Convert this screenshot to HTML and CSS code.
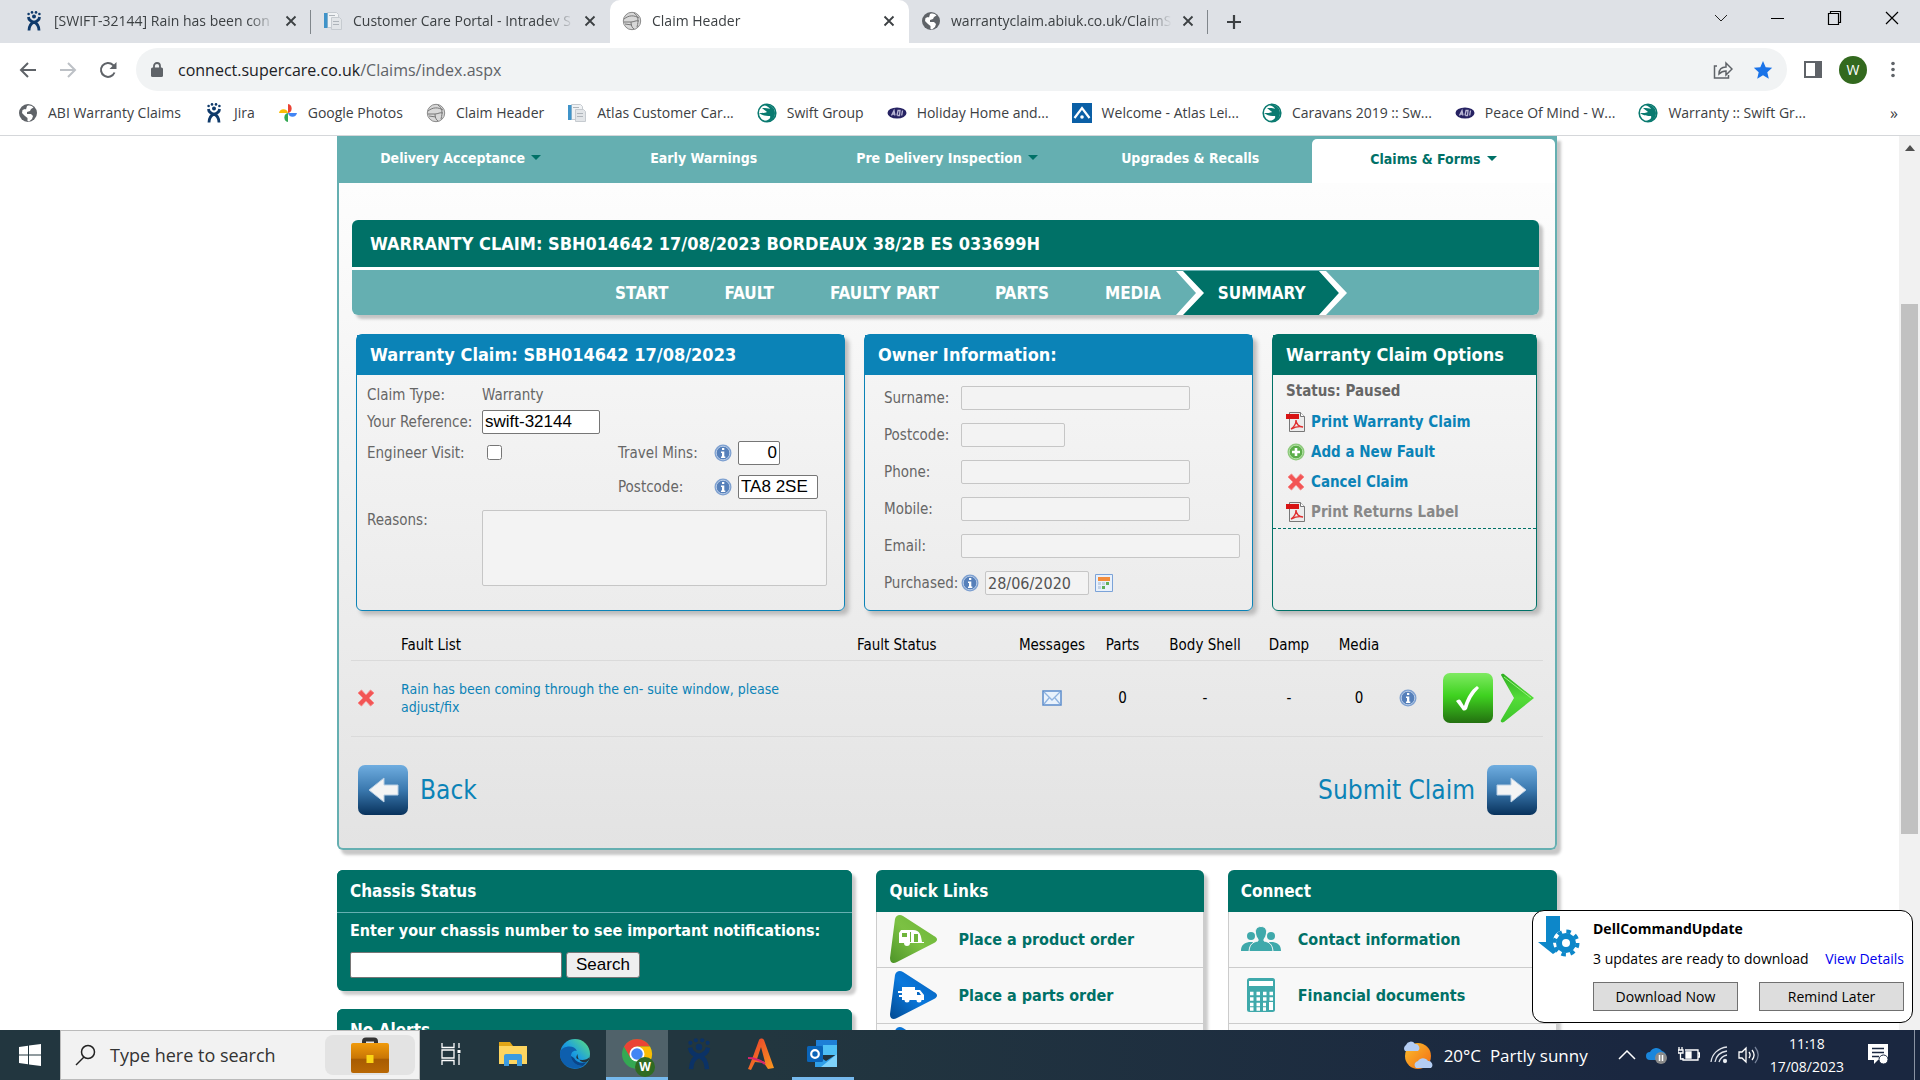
FILE: index.html
```html
<!DOCTYPE html>
<html lang="en">
<head>
    <meta charset="UTF-8">
    <meta name="viewport" content="width=device-width, initial-scale=1.0">
    <title>Claim Header</title>
    <link rel="stylesheet" href="styles.css">
</head>
<body>
    <!-- ICON SPRITE -->
    <svg class="sprite" aria-hidden="true">
        <defs>
            <linearGradient id="gBlue" x1="0" y1="0" x2="0" y2="1"><stop offset="0" stop-color="#6fade0"/><stop offset=".5" stop-color="#3a78ae"/><stop offset="1" stop-color="#08325c"/></linearGradient>
            <linearGradient id="gGreen" x1="0" y1="0" x2="0" y2="1"><stop offset="0" stop-color="#7fea62"/><stop offset=".45" stop-color="#3fd220"/><stop offset="1" stop-color="#237010"/></linearGradient>
            <linearGradient id="gArrow" x1="0" y1="0" x2="0" y2="1"><stop offset="0" stop-color="#2fae22"/><stop offset=".5" stop-color="#54dc38"/><stop offset="1" stop-color="#3cc42a"/></linearGradient>
            <linearGradient id="gLeaf" x1="0" y1="1" x2="1" y2="0"><stop offset="0" stop-color="#4d9428"/><stop offset=".5" stop-color="#7cc143"/><stop offset="1" stop-color="#6ab536"/></linearGradient>
            <linearGradient id="gSea" x1="0" y1="1" x2="1" y2="0"><stop offset="0" stop-color="#024a92"/><stop offset=".5" stop-color="#0a78dc"/><stop offset="1" stop-color="#0560b8"/></linearGradient>
            <linearGradient id="gCase" x1="0" y1="0" x2="0" y2="1"><stop offset="0" stop-color="#f09a0a"/><stop offset=".5" stop-color="#c97606"/><stop offset=".55" stop-color="#a85c02"/><stop offset="1" stop-color="#b96804"/></linearGradient>
            <linearGradient id="gEdge" x1="0" y1="1" x2="1" y2="0"><stop offset="0" stop-color="#0c59a4"/><stop offset=".5" stop-color="#1b9de2"/><stop offset="1" stop-color="#5fe37a"/></linearGradient>
            <linearGradient id="gA" x1="0" y1="0" x2="1" y2="1"><stop offset="0" stop-color="#e8382e"/><stop offset="1" stop-color="#fa9a1e"/></linearGradient>
            <linearGradient id="gSun" x1="0" y1="0" x2="1" y2="1"><stop offset="0" stop-color="#fbc02d"/><stop offset="1" stop-color="#f26a12"/></linearGradient>
        </defs>
        <symbol id="jira" viewBox="0 0 16 20"><g fill="currentColor"><circle cx="2.6" cy="3" r="1.3"/><circle cx="6" cy="1.4" r="1.3"/><circle cx="10" cy="1.4" r="1.3"/><circle cx="13.4" cy="3" r="1.3"/><circle cx="8" cy="5.600" r="2"/></g><path fill="none" stroke="currentColor" stroke-width="2.800" d="M2.400 6c.4 3 2.500 4.500 5.600 5.200 3 1 4.800 4 5 8.300M13.600 6c-.4 3-2.500 4.500-5.600 5.200-3 1-4.800 4-5 8.300"/></symbol>
        <symbol id="doc" viewBox="0 0 20 20"><path fill="#f0f2f4" stroke="#c6cbd0" d="M4.500 1.500h9l2 2v13h-11z"/><path fill="#3f93c9" d="M1 2h3.500v15H1z"/><path fill="#e2e5e8" stroke="#c6cbd0" d="M8.500 6.500h8l2 2v10h-10z"/><path stroke="#aeb4ba" d="M10 10.500h6M10 13.500h6M6 4.500h6"/></symbol>
        <symbol id="globe" viewBox="0 0 20 20"><circle cx="10" cy="10" r="9" fill="#5f6368"/><path fill="#fff" d="M9 3c3-1 5 0 6.500 1.500L13 6l-1 2-3 1v2h4l2 2-1 3-3 2.500-1.500-.5V15L7 13l-3-3 .5-3L7 6l1 .6z"/></symbol>
        <symbol id="ball" viewBox="0 0 20 20"><circle cx="10" cy="10" r="8.700" fill="#d8d8d8" stroke="#8a8a8a"/><path fill="none" stroke="#777" d="M2 8c5-4 10-4 15-1M2 11h7c3 0 5-2 8-1M9 11c0 3 1 6 3 7M12 2c4 3 5 7 3 14M3 13l7 1"/></symbol>
        <symbol id="photos" viewBox="0 0 20 20"><path fill="#ea4335" d="M10 1a4.600 4.600 0 0 1 0 9z"/><path fill="#4285f4" d="M19 10a4.600 4.600 0 0 1-9 0z"/><path fill="#34a853" d="M10 19a4.600 4.600 0 0 1 0-9z"/><path fill="#fbbc04" d="M1 10a4.600 4.600 0 0 1 9 0z"/></symbol>
        <symbol id="swift" viewBox="0 0 20 20"><circle cx="10" cy="10" r="8.800" fill="#fff" stroke="#0a7a70" stroke-width="1.600"/><path fill="#0a7a70" d="M7 2c5-2 11 2 11 8s-5 10-10 8c4-1 6-3 5-5-3 0-7 0-11-3 4 0 6 0 8-1C8 7 6 6 5 5c4 0 6 0 8 1-1-2-3-3-6-4z"/></symbol>
        <symbol id="abi" viewBox="0 0 20 20"><ellipse cx="10" cy="10" rx="9.500" ry="5.500" fill="#262262"/><path stroke="#b9b7d4" stroke-width="1.300" fill="none" d="M4.500 12.500l2.500-5 1 5M5.500 11h2M10 12.500l1-5h2l-.5 5h-2M15.500 7.500l-.8 5"/></symbol>
        <symbol id="atlas" viewBox="0 0 20 20"><path fill="#0a5fa6" d="M0 0h20v20H0z"/><path fill="none" stroke="#fff" stroke-width="2.200" d="M2.500 15L10 5l7.500 10"/><circle cx="10" cy="14" r="1.800" fill="#fff"/></symbol>
        <symbol id="close" viewBox="0 0 12 12"><path stroke="currentColor" stroke-width="1.800" d="M1.500 1.500l9 9M10.500 1.500l-9 9"/></symbol>
        <symbol id="info" viewBox="0 0 18 18"><circle cx="9" cy="9" r="8.500" fill="#7c9fd0"/><circle cx="9" cy="9" r="6.800" fill="#5680ba" stroke="#b7cbe6"/><path fill="#fff" d="M8 4h2.300v2H8zM7 7.500h3.300v5h1V14H7v-1.500h1V9H7z"/></symbol>
        <symbol id="cross" viewBox="0 0 18 18"><path fill="#f25555" stroke="#f78a8a" d="M1 4l3.500-3L9 6l4.500-5L17 4l-5 5 5 5-3.500 3L9 12l-4.500 5L1 14l5-5z"/></symbol>
        <symbol id="pdf" viewBox="0 0 20 20"><path fill="#ececec" stroke="#777" d="M3.500.5h11l4 4v15h-15z"/><path fill="#fff" stroke="#777" d="M14.500.5v4h4"/><path fill="#d81414" d="M0 2h13v5H0z"/><path fill="none" stroke="#e03030" stroke-width="1.400" d="M5 17c3-2 5-5 5-9 0 4 3 7 7 7-4-1-8 0-12 2z"/></symbol>
        <symbol id="plus" viewBox="0 0 18 18"><circle cx="9" cy="9" r="8.500" fill="#8cc97a"/><circle cx="9" cy="9" r="6.800" fill="#5cae4a" stroke="#b4e0a6"/><path stroke="#fff" stroke-width="2.600" d="M9 5v8M5 9h8"/></symbol>
        <symbol id="calendar" viewBox="0 0 18 18"><path fill="#e8f0fb" stroke="#7ba3d8" d="M.5.5h17v17H.5z"/><path fill="#f28c3c" d="M3 3h12v4H3z"/><path fill="#c3d2e6" d="M3 8h3v3H3zM7 8h3v3H7zM3 12h3v3H3z"/><path fill="#5fae5a" d="M11 8h3v3h-3zM7 12h3v3H7z"/></symbol>
        <symbol id="mail" viewBox="0 0 20 16"><path fill="#e9f2fc" stroke="#5b8ccb" stroke-width="1.500" d="M1 1h18v14H1z"/><path fill="none" stroke="#8fb3e0" stroke-width="1.300" d="M2 2l8 8 8-8M2 14l5-6M18 14l-5-6"/></symbol>
        <symbol id="tick" viewBox="0 0 50 50"><rect width="50" height="50" rx="7" fill="url(#gGreen)"/><path fill="#fff" d="M13 28c2-2 4-2 5 0l3 5c3-9 7-16 13-20l2 2c-6 6-10 13-12 21-2 2-4 2-5 0z"/></symbol>
        <symbol id="next" viewBox="0 0 34 50"><path fill="url(#gArrow)" d="M1 2c1-2 3-1 4 0l29 23L4 49c-2 1-4 0-3-2l13-22z"/><path fill="none" stroke="#9af07e" d="M4 4l27 21"/></symbol>
        <symbol id="arrow" viewBox="0 0 50 50"><rect width="50" height="50" rx="7" fill="url(#gBlue)"/><path fill="#f4f4f4" stroke="#b8cfe4" stroke-width="1" d="M11 25l15-12v7h14v10H26v7z"/></symbol>
        <symbol id="caravan" viewBox="0 0 48 50"><path fill="url(#gLeaf)" d="M6 5c1-4 5-5 8-3l31 20c4 2 4 5 0 7L8 48c-4 2-7 1-7-4z"/><path fill="#fff" d="M12 16h12c7 0 8 5 9 12h2v1H21a3 3 0 0 1-6 0h-5V19z"/><path fill="#6fb53b" d="M13 19h5v4h-5zM21 18h1v10h-1zM25 20h4v8h-4z"/></symbol>
        <symbol id="truck" viewBox="0 0 48 50"><path fill="url(#gSea)" d="M6 5c1-4 5-5 8-3l31 20c4 2 4 5 0 7L8 48c-4 2-7 1-7-4z"/><path fill="#fff" d="M13 17h13v3h5l4 5v5H13v-3h-3v-2h3v-2H9v-2h4z"/><circle cx="18" cy="30" r="2.500" fill="#fff"/><circle cx="30" cy="30" r="2.500" fill="#fff"/><path fill="#0868c4" d="M28 22h2l2 3h-4z"/></symbol>
        <symbol id="people" viewBox="0 0 40 24"><g fill="#3fa9ab"><circle cx="10" cy="9" r="4"/><circle cx="30" cy="9" r="4"/><path d="M0 24c0-6 3-8 8-9h4v9zM40 24c0-6-3-8-8-9h-4v9z"/><path stroke="#f8f8f8" d="M20-.5c4 0 6 3 5.500 6.500-.3 3-1.500 5-2.500 6v2c5 1 8.500 3 9 10.500H8c.5-7.500 4-9.500 9-10.500v-2c-1-1-2.200-3-2.500-6C14 2.500 16-.5 20-.5z"/></g></symbol>
        <symbol id="calc" viewBox="0 0 28 34"><rect width="28" height="34" rx="2.500" fill="#3fa9ab"/><path fill="#fff" d="M2 3h24v5H2z"/><path stroke="#fff" stroke-width="3.500" stroke-dasharray="3.500 3" d="M3 15.500h23M3 21h23M3 26.500h16M3 31h16"/><path fill="#fff" d="M22 24h4v8h-4z"/></symbol>
        <symbol id="dell" viewBox="0 0 42 42"><path fill="#0d87c9" d="M8 0h14v15c-7 3-9 10-5 18l1 3-3 2L0 26h8z"/><g fill="none" stroke="#0d87c9"><circle cx="28" cy="27" r="7" stroke-width="6"/><circle cx="28" cy="27" r="11.500" stroke-width="4" stroke-dasharray="4.500 4.530"/></g></symbol>
        <symbol id="chrome" viewBox="0 0 32 32"><circle cx="16" cy="16" r="15" fill="#34a853"/><path fill="#ea4335" d="M3 8.500a15 15 0 0 1 26 0H16L9.500 20z"/><path fill="#fbbc04" d="M29 8.500A15 15 0 0 1 16 31l6.500-11.500L16 8.500z"/><circle cx="16" cy="16" r="7.500" fill="#fff"/><circle cx="16" cy="16" r="5.800" fill="#4285f4"/></symbol>
    </svg>

    <!-- BROWSER TABS -->
    <header class="tab-strip">
        <div class="tab">
            <svg class="icon navy"><use href="#jira"/></svg>
            <span class="tab-title">[SWIFT-32144] Rain has been con</span>
            <button class="tab-close" aria-label="Close tab"><svg><use href="#close"/></svg></button>
        </div>
        <div class="tab">
            <svg class="icon"><use href="#doc"/></svg>
            <span class="tab-title">Customer Care Portal - Intradev S</span>
            <button class="tab-close" aria-label="Close tab"><svg><use href="#close"/></svg></button>
        </div>
        <div class="tab active">
            <svg class="icon"><use href="#ball"/></svg>
            <span class="tab-title">Claim Header</span>
            <button class="tab-close" aria-label="Close tab"><svg><use href="#close"/></svg></button>
        </div>
        <div class="tab">
            <svg class="icon"><use href="#globe"/></svg>
            <span class="tab-title">warrantyclaim.abiuk.co.uk/ClaimS</span>
            <button class="tab-close" aria-label="Close tab"><svg><use href="#close"/></svg></button>
        </div>
        <button class="new-tab" aria-label="New tab"><svg width="16" height="16"><path d="M8 1v14M1 8h14" stroke="#3c4043" stroke-width="2.200"/></svg></button>
        <div class="window-buttons">
            <button aria-label="Search tabs"><svg width="16" height="16"><path d="M2 5l6 6 6-6" fill="none" stroke="#222"/></svg></button>
            <button aria-label="Minimise"><svg width="16" height="16"><path d="M1 8.500h13" stroke="#000"/></svg></button>
            <button aria-label="Restore"><svg width="16" height="16"><path d="M1.500 3.500h10v11h-10zM3.500 3.500v-2h10v11h-2" fill="none" stroke="#000" stroke-width="1.200"/></svg></button>
            <button aria-label="Close"><svg width="16" height="16"><path d="M2 2l12 12M14 2L2 14" stroke="#000" stroke-width="1.200"/></svg></button>
        </div>
    </header>

    <!-- ADDRESS BAR -->
    <div class="toolbar">
        <button aria-label="Back"><svg width="20" height="20"><path d="M18 10H3M10 3l-7 7 7 7" fill="none" stroke="#5f6368" stroke-width="2"/></svg></button>
        <button aria-label="Forward"><svg width="20" height="20"><path d="M2 10h15M10 3l7 7-7 7" fill="none" stroke="#bdc1c6" stroke-width="2"/></svg></button>
        <button aria-label="Reload"><svg width="20" height="20"><path d="M16.500 12.500A7 7 0 1 1 15 5l1.500 1.500" fill="none" stroke="#5f6368" stroke-width="2"/><path d="M18.500 2v7h-7z" fill="#5f6368"/></svg></button>
        <div class="address">
            <svg width="12" height="16"><path d="M3 6V4a3 3 0 0 1 6 0v2" fill="none" stroke="#5f6368" stroke-width="1.800"/><rect y="5.500" width="12" height="9.500" rx="1.500" fill="#5f6368"/></svg>
            <span class="url">connect.supercare.co.uk<span class="path">/Claims/index.aspx</span></span>
            <button aria-label="Share"><svg width="20" height="20"><path d="M4 6H1.500v12h14v-3M6 14c0-5 3-7 7-7V3l6 6-6 6v-4c-3 0-5 1-7 3z" fill="none" stroke="#5f6368" stroke-width="1.500"/></svg></button>
            <button aria-label="Bookmark"><svg width="20" height="20"><path d="M10 1l2.700 6.200 6.500.6-4.900 4.400 1.500 6.500L10 15.300l-5.800 3.400 1.500-6.500L.8 7.800l6.500-.6z" fill="#1a73e8"/></svg></button>
        </div>
        <button aria-label="Side panel"><svg width="20" height="20"><path d="M2 2h16v15H2z" fill="#fff" stroke="#5f6368" stroke-width="2"/><path d="M12 2h6v15h-6z" fill="#5f6368"/></svg></button>
        <button class="avatar" aria-label="Profile">W</button>
        <button aria-label="Menu"><svg width="20" height="20" fill="#5f6368"><circle cx="10" cy="3.500" r="1.800"/><circle cx="10" cy="9.500" r="1.800"/><circle cx="10" cy="15.500" r="1.800"/></svg></button>
    </div>

    <!-- BOOKMARKS -->
    <nav class="bookmarks">
        <a href="#"><svg class="icon"><use href="#globe"/></svg>ABI Warranty Claims</a>
        <a href="#"><svg class="icon navy"><use href="#jira"/></svg>Jira</a>
        <a href="#"><svg class="icon"><use href="#photos"/></svg>Google Photos</a>
        <a href="#"><svg class="icon"><use href="#ball"/></svg>Claim Header</a>
        <a href="#"><svg class="icon"><use href="#doc"/></svg>Atlas Customer Car...</a>
        <a href="#"><svg class="icon"><use href="#swift"/></svg>Swift Group</a>
        <a href="#"><svg class="icon"><use href="#abi"/></svg>Holiday Home and...</a>
        <a href="#"><svg class="icon"><use href="#atlas"/></svg>Welcome - Atlas Lei...</a>
        <a href="#"><svg class="icon"><use href="#swift"/></svg>Caravans 2019 :: Sw...</a>
        <a href="#"><svg class="icon"><use href="#abi"/></svg>Peace Of Mind - W...</a>
        <a href="#"><svg class="icon"><use href="#swift"/></svg>Warranty :: Swift Gr...</a>
        <button class="more" aria-label="More bookmarks">»</button>
    </nav>

    <!-- PAGE -->
    <div class="viewport">
        <div class="page">
            <main class="main">
                <nav class="main-nav">
                    <a href="#" class="drop">Delivery Acceptance</a>
                    <a href="#">Early Warnings</a>
                    <a href="#" class="drop">Pre Delivery Inspection</a>
                    <a href="#">Upgrades &amp; Recalls</a>
                    <a href="#" class="drop current">Claims &amp; Forms</a>
                </nav>

                <div class="claim-bar">
                    <h1>WARRANTY CLAIM: SBH014642 17/08/2023 BORDEAUX 38/2B ES 033699H</h1>
                    <nav class="steps">
                        <a href="#">START</a>
                        <a href="#">FAULT</a>
                        <a href="#">FAULTY PART</a>
                        <a href="#">PARTS</a>
                        <a href="#">MEDIA</a>
                        <svg width="28" height="44"><path d="M6 0h22v44H6l20-22z" fill="#007167"/><path d="M0 0h7l21 22L7 44H0l20-22z" fill="#fff"/></svg>
                        <a href="#" class="on">SUMMARY</a>
                        <svg width="28" height="44"><path d="M0 0l20 22L0 44z" fill="#007167"/><path d="M0 0h7l21 22L7 44H0l20-22z" fill="#fff"/></svg>
                    </nav>
                </div>

                <div class="panels">
                    <section class="panel">
                        <h2>Warranty Claim: SBH014642 17/08/2023</h2>
                        <div class="claim-form">
                            <span>Claim Type:</span><span class="wide">Warranty</span>
                            <label for="ref">Your Reference:</label><div class="wide"><input class="w-ref" id="ref" value="swift-32144"></div>
                            <label for="visit">Engineer Visit:</label><input type="checkbox" id="visit">
                            <label for="mins">Travel Mins:</label><div class="with-icon"><svg class="icon-sm"><use href="#info"/></svg><input class="w-mins" id="mins" value="0"></div>
                            <label class="col3" for="pc">Postcode:</label><div class="with-icon"><svg class="icon-sm"><use href="#info"/></svg><input class="w-pc" id="pc" value="TA8 2SE"></div>
                            <label class="top" for="reasons">Reasons:</label><textarea class="wide" id="reasons" disabled></textarea>
                        </div>
                    </section>

                    <section class="panel">
                        <h2>Owner Information:</h2>
                        <div class="owner-form">
                            <label for="surname">Surname:</label><input class="w-std" id="surname" disabled>
                            <label for="opc">Postcode:</label><input class="w-short" id="opc" disabled>
                            <label for="phone">Phone:</label><input class="w-std" id="phone" disabled>
                            <label for="mobile">Mobile:</label><input class="w-std" id="mobile" disabled>
                            <label for="email">Email:</label><input class="w-long" id="email" disabled>
                            <label for="bought">Purchased:</label><div class="with-icon"><svg class="icon-sm"><use href="#info"/></svg><input class="w-short" id="bought" value="28/06/2020" disabled><svg class="icon-sm"><use href="#calendar"/></svg></div>
                        </div>
                    </section>

                    <section class="panel green">
                        <h2>Warranty Claim Options</h2>
                        <div class="options">
                            <p>Status: Paused</p>
                            <a href="#"><svg class="icon"><use href="#pdf"/></svg>Print Warranty Claim</a>
                            <a href="#"><svg class="icon pad"><use href="#plus"/></svg>Add a New Fault</a>
                            <a href="#"><svg class="icon pad"><use href="#cross"/></svg>Cancel Claim</a>
                            <a href="#" class="off"><svg class="icon"><use href="#pdf"/></svg>Print Returns Label</a>
                        </div>
                    </section>
                </div>

                <table class="faults">
                    <colgroup><col class="c-del"><col><col class="c-status"><col class="c-msg"><col class="c-parts"><col class="c-body"><col class="c-damp"><col class="c-media"><col class="c-act"></colgroup>
                    <thead>
                        <tr><th></th><th class="left">Fault List</th><th class="left">Fault Status</th><th>Messages</th><th>Parts</th><th>Body Shell</th><th>Damp</th><th>Media</th><th></th></tr>
                    </thead>
                    <tbody>
                        <tr>
                            <td class="left del"><svg class="icon-sm"><use href="#cross"/></svg></td>
                            <td class="left fault"><a href="#">Rain has been coming through the en- suite window, please adjust/fix</a></td>
                            <td></td>
                            <td><svg class="icon-mail"><use href="#mail"/></svg></td>
                            <td>0</td><td>-</td><td>-</td><td>0</td>
                            <td><div class="actions"><svg class="icon-sm"><use href="#info"/></svg><svg class="big"><use href="#tick"/></svg><svg class="go"><use href="#next"/></svg></div></td>
                        </tr>
                    </tbody>
                </table>

                <div class="pager">
                    <a href="#"><svg class="big"><use href="#arrow"/></svg>Back</a>
                    <a href="#">Submit Claim<svg class="big flip"><use href="#arrow"/></svg></a>
                </div>
            </main>

            <div class="bottom">
                <div class="left-col">
                    <section class="card solid">
                        <h2>Chassis Status</h2>
                        <form class="chassis">
                            <label for="chassis">Enter your chassis number to see important notifications:</label>
                            <div class="search-row"><input id="chassis"><button type="button">Search</button></div>
                        </form>
                    </section>
                    <section class="card solid">
                        <h2>No Alerts</h2>
                    </section>
                </div>
                <section class="card">
                    <h2>Quick Links</h2>
                    <a href="#"><svg class="tri"><use href="#caravan"/></svg>Place a product order</a>
                    <a href="#"><svg class="tri"><use href="#truck"/></svg>Place a parts order</a>
                    <a href="#"><svg class="tri"><use href="#truck"/></svg></a>
                </section>
                <section class="card connect">
                    <h2>Connect</h2>
                    <a href="#"><svg class="link-icon"><use href="#people"/></svg>Contact information</a>
                    <a href="#"><svg class="link-icon"><use href="#calc"/></svg>Financial documents</a>
                    <a href="#"></a>
                </section>
            </div>
        </div>

        <div class="scrollbar">
            <svg width="10" height="6"><path d="M0 6l5-6 5 6z" fill="#505050"/></svg>
            <div class="thumb"></div>
        </div>
    </div>

    <!-- TASKBAR -->
    <footer class="taskbar">
        <button class="start" aria-label="Start"><svg width="22" height="22" fill="#fff"><path d="M0 3l9-1.300V10.500H0zM10 1.500L22 0v10.500H10zM0 11.500h9v8.800L0 19zM10 11.500h12V22l-12-1.500z"/></svg></button>
        <div class="search">
            <svg width="24" height="24"><circle cx="14" cy="9" r="6.500" fill="none" stroke="#222" stroke-width="1.500"/><path d="M10 14l-8 8" stroke="#222" stroke-width="1.500"/></svg>
            <span>Type here to search</span>
            <div class="case"><svg width="38" height="36"><path d="M13 7V4.500a2 2 0 0 1 2-2h8a2 2 0 0 1 2 2V7" fill="none" stroke="#333" stroke-width="4"/><rect y="6" width="38" height="30" rx="2" fill="url(#gCase)"/><rect x="15.500" y="18" width="7" height="8" fill="#fbd514"/></svg></div>
        </div>
        <div class="apps">
            <button aria-label="Task view"><svg width="20" height="22" fill="none" stroke="#fff" stroke-width="1.300"><path d="M1 0v4.500h12V0M1 7h12v8H1zM1 22v-4.500h12V22M18 0v5M18 11v11"/><path d="M16.500 7h3v3h-3z" fill="#fff" stroke="none"/></svg></button>
            <button aria-label="File Explorer"><svg width="28" height="24"><path d="M0 0h11l3 4h14v18H0z" fill="#e0a516"/><path d="M0 4h28v18H0z" fill="#fdd560"/><path d="M5 24V14a2 2 0 0 1 2-2h14a2 2 0 0 1 2 2v10h-5v-6h-8v6z" fill="#3c9be0"/></svg></button>
            <button aria-label="Edge"><svg width="32" height="32"><circle cx="16" cy="16" r="15" fill="url(#gEdge)"/><path d="M1 14c2-6 14-8 17-1-4-1-6 2-6 5 0 5 5 10 12 10-3 2-7 3-10 2C5 29 0 21 1 14z" fill="#0e5fae"/><path d="M30.500 19c-2 3-8 4-12 2-2-1-1-3 0-5 0 7 5 9 9 8 2-1 3-3 3-5z" fill="#22363f"/><path d="M12 18c0 5 5 10 12 10l4-4c-6 2-11 0-13-4z" fill="#0b4488"/></svg></button>
            <button class="open lit" aria-label="Chrome"><svg width="32" height="32"><use href="#chrome"/></svg><span class="badge">W</span></button>
            <button class="dim" aria-label="Jira"><svg width="26" height="32"><use href="#jira"/></svg></button>
            <button aria-label="Acronis"><svg width="26" height="32"><path fill-rule="evenodd" d="M0 31C4 22 8 10 11 2c1-2 4-2 5 0l10 28-6 1-4-6-9-1-4 8zM13 9L9 21l8 3z" fill="url(#gA)"/><path d="M0 20c6 0 12 2 17 6" fill="none" stroke="#d6246e" stroke-width="2.200"/></svg></button>
            <button class="open" aria-label="Outlook"><svg width="32" height="30"><path d="M9 1h21v14H9z" fill="#1e7fd6"/><path d="M16 6h14v10H16z" fill="#4fc0f5"/><path d="M8 15l11 7 11-7v13H8z" fill="#2f9fe8"/><path d="M30 15v13H14z" fill="#7fd3fa"/><rect y="7" width="16" height="16" rx="1.500" fill="#0a64b8"/><circle cx="8" cy="15" r="3.800" fill="none" stroke="#fff" stroke-width="2.200"/></svg></button>
        </div>
        <div class="tray">
            <div class="weather"><svg width="32" height="32"><circle cx="16" cy="17" r="13" fill="url(#gSun)"/><g fill="#b4cdf3"><path d="M3 12a4 4 0 0 1 1-6 5 5 0 0 1 9-1 4 4 0 0 1 3 7zM14 29a4 4 0 0 1 2-7 6 6 0 0 1 10 0 4 4 0 0 1 3 7z"/></g></svg>20°C&nbsp; Partly sunny</div>
            <svg width="18" height="10"><path d="M1 9l8-8 8 8" fill="none" stroke="#fff" stroke-width="1.500"/></svg>
            <svg width="22" height="18"><path d="M4 14a4 4 0 0 1 0-8 7 7 0 0 1 12-1c4 1 5 5 3 9z" fill="#1a86dc"/><circle cx="15" cy="12" r="6" fill="#8a8a8a"/><path d="M13.500 9v6M16.500 9v6" stroke="#fff" stroke-width="1.500"/></svg>
            <svg width="22" height="16" fill="none" stroke="#fff" stroke-width="1.300"><path d="M7 3h13v10H5v-2M20 6h1.500v4H20M1 0v3M4 0v3M0 3h5v3H0zM2.500 6v6H5"/><path d="M8 5h5v6H8z" fill="#fff"/></svg>
            <svg width="18" height="18" fill="none" stroke="#dfe3ea" stroke-width="1.300"><path d="M1 16C2 8 8 2 17 1M5 16c1-6 5-10 12-11M9 16c1-3 3-6 8-7"/><circle cx="15" cy="15" r="1.500" fill="#fff"/></svg>
            <svg width="22" height="18" fill="none" stroke="#fff" stroke-width="1.300"><path d="M1 6h3l4-4v14l-4-4H1zM11 6c1.500 2 1.500 4 0 6M14 4c2.500 3 2.500 7 0 10"/><path d="M17 1c4 5 4 11 0 16" stroke="#76829a"/></svg>
            <div class="clock">11:18<br>17/08/2023</div>
            <svg width="22" height="22"><path d="M0 0h20v16H10l-4 4v-4H0z" fill="#fff"/><path d="M4 4.500h12M4 8.500h12M4 12.500h7" stroke="#1a2740" stroke-width="1.500"/><circle cx="15.500" cy="15.500" r="4.500" fill="#fff" stroke="#1a2740"/></svg>
        </div>
    </footer>

    <!-- UPDATE POPUP -->
    <aside class="popup">
        <svg class="dell"><use href="#dell"/></svg>
        <div class="popup-body">
            <strong>DellCommandUpdate</strong>
            <div class="popup-line"><span>3 updates are ready to download</span><a href="#">View Details</a></div>
            <div class="popup-line"><button>Download Now</button><button>Remind Later</button></div>
        </div>
    </aside>
</body>
</html>
```
FILE: styles.css
```css
* {
    box-sizing: border-box;
}

body {
    margin: 0;
    height: 100vh;
    display: flex;
    flex-direction: column;
    overflow: hidden;
    background: #fff;
    font-family: "Segoe UI", "Open Sans", sans-serif;
    font-size: 14px;
    color: #3c4043;
}

a {
    color: inherit;
    text-decoration: none;
}

svg {
    display: block;
    flex: none;
}

button {
    font: inherit;
    color: inherit;
}

.sprite {
    position: absolute;
    width: 0;
    height: 0;
}

.icon {
    width: 20px;
    height: 20px;
}

.icon-sm {
    width: 18px;
    height: 18px;
}

.navy {
    color: #0f3a6b;
}

/* Browser tabs */
.tab-strip {
    display: flex;
    height: 43px;
    padding-left: 12px;
    background: #dee1e6;
}

.tab {
    position: relative;
    display: flex;
    align-items: center;
    gap: 10px;
    width: 299px;
    padding: 0 14px 2px 12px;
}

.tab:not(.active)::after {
    content: "";
    position: absolute;
    right: 0;
    top: 10px;
    width: 1px;
    height: 24px;
    background: #80868b;
}

.tab:nth-child(2)::after {
    display: none;
}

.tab-title {
    flex: 1;
    white-space: nowrap;
    -webkit-mask-image: linear-gradient(90deg, #000 88%, transparent);
    mask-image: linear-gradient(90deg, #000 88%, transparent);
}

.tab.active {
    background: #fff;
    border-radius: 10px 10px 0 0;
}

.tab-close {
    padding: 0;
    border: none;
    background: none;
}

.tab-close svg {
    width: 12px;
    height: 12px;
}

.new-tab {
    margin-left: 12px;
    border: none;
    background: none;
}

.window-buttons {
    display: flex;
    margin-left: auto;
    height: 36px;
}

.window-buttons button {
    display: flex;
    justify-content: center;
    align-items: center;
    width: 57px;
    border: none;
    background: none;
}

/* Address bar */
.toolbar {
    display: flex;
    align-items: center;
    height: 53px;
    padding: 0 7px 0 8px;
}

.toolbar button {
    display: flex;
    justify-content: center;
    align-items: center;
    width: 40px;
    height: 40px;
    padding: 0;
    border: none;
    background: none;
}

.address {
    flex: 1;
    display: flex;
    align-items: center;
    height: 43px;
    margin: 0 6px 0 8px;
    padding: 0 4px 0 15px;
    border-radius: 22px;
    background: #f1f3f4;
}

.url {
    flex: 1;
    margin-left: 15px;
    font-size: 16px;
    color: #202124;
}

.path {
    color: #5f6368;
}

.toolbar .avatar {
    width: 28px;
    height: 28px;
    margin: 0 6px;
    border-radius: 50%;
    background: #33691e;
    color: #fff;
    font-size: 14px;
}

/* Bookmarks */
.bookmarks {
    display: flex;
    align-items: center;
    gap: 23px;
    height: 40px;
    padding: 0 22px 6px 18px;
    border-bottom: 1px solid #d5d7da;
    white-space: nowrap;
}

.bookmarks a {
    display: flex;
    align-items: center;
    gap: 10px;
}

.more {
    margin-left: auto;
    padding: 0;
    border: none;
    background: none;
    font-size: 16px;
}

/* Page */
.viewport {
    flex: 1;
    min-height: 0;
    display: flex;
    overflow: hidden;
}

.page {
    flex: 1;
    padding-right: 5px;
    font-family: Tahoma, "DejaVu Sans Condensed", "DejaVu Sans", sans-serif;
    color: #666;
}

.main,
.bottom {
    max-width: 1220px;
    margin: 0 auto;
}

.main {
    border: 2px solid #65afb1;
    border-top: none;
    border-radius: 0 0 6px 6px;
    background: linear-gradient(#fff, #e3e3e3);
    box-shadow: 4px 5px 3px #c8c8c8;
}

.main-nav {
    display: flex;
    height: 47px;
    background: #65afb1;
}

.main-nav a {
    flex: 1;
    display: flex;
    justify-content: center;
    align-items: center;
    gap: 6px;
    padding-bottom: 4px;
    color: #fff;
    font-weight: bold;
}

.drop::after {
    content: "";
    border: 5px solid transparent;
    border-top-color: #007167;
    border-bottom: none;
}

.main-nav .current {
    margin-top: 3px;
    padding-bottom: 5px;
    border-radius: 5px 5px 0 0;
    background: #fff;
    color: #007167;
}

.claim-bar {
    margin: 37px 16px 0 13px;
    border-radius: 6px;
    background: #fff;
    box-shadow: 4px 4px 3px #c4c4c4;
    color: #fff;
}

.claim-bar h1 {
    margin: 0 0 3px;
    padding: 0 18px;
    border-radius: 6px 6px 0 0;
    background: #007167;
    font-size: 18px;
    line-height: 47px;
}

.steps {
    display: flex;
    align-items: center;
    height: 45px;
    padding-left: 235px;
    border-radius: 0 0 6px 6px;
    background: #65afb1;
    font-size: 17px;
    font-weight: bold;
}

.steps a {
    padding: 0 28px;
}

.steps a:nth-of-type(5) {
    padding-right: 15px;
}

.steps .on {
    padding: 0 14px;
    background: #007167;
    line-height: 44px;
}

.panels {
    display: grid;
    grid-template-columns: 489fr 389fr 265fr;
    gap: 19px;
    margin: 19px 18px 0 17px;
}

.panel {
    height: 277px;
    border: 1px solid #0b83b7;
    border-radius: 6px;
    box-shadow: 4px 4px 4px #bbb;
    background: linear-gradient(#f6f6f6, #ececec);
}

.panel h2 {
    margin: 0;
    padding: 0 13px;
    background: #0b83b7;
    color: #fff;
    font-size: 18px;
    line-height: 40px;
}

.green {
    border-color: #007167;
}

.green h2 {
    background: #007167;
}

.page input,
.page textarea {
    font-family: Arial, "Liberation Sans", sans-serif;
    font-size: 17px;
    height: 24px;
    padding: 1px 2px;
    border: 1px solid #767676;
    border-radius: 2px;
    color: #000;
    background: #fff;
}

.page input:disabled,
.page textarea:disabled {
    border-color: #c6c6c6;
    background: #f3f3f3;
    color: #545454;
}

.page input:disabled {
    font-family: Tahoma, "DejaVu Sans Condensed", sans-serif;
    font-size: 16px;
}

.claim-form {
    display: grid;
    grid-template-columns: 115px 136px 96px 1fr;
    grid-template-rows: 27px 28px 33px 35px 88px;
    align-items: center;
    padding: 6px 17px 0 10px;
    font-size: 15px;
}

.claim-form .wide {
    grid-column: 2 / -1;
}

.claim-form .col3 {
    grid-column: 3;
}

.claim-form .top {
    align-self: start;
    padding-top: 7px;
}

.claim-form textarea {
    height: 76px;
    resize: none;
}

.claim-form input[type="checkbox"] {
    width: 15px;
    height: 15px;
    margin: 0 0 0 5px;
}

.with-icon {
    display: flex;
    align-items: center;
    gap: 6px;
}

.claim-form .w-ref {
    width: 118px;
}

.claim-form .w-mins {
    width: 42px;
    text-align: right;
}

.claim-form .w-pc {
    width: 80px;
}

.owner-form {
    display: grid;
    grid-template-columns: 77px 1fr;
    row-gap: 13px;
    align-items: center;
    padding: 11px 12px 0 19px;
    font-size: 15px;
}

.w-std {
    width: 229px;
}

.w-short {
    width: 104px;
}

.w-long {
    width: 279px;
}

.options {
    padding-bottom: 1px;
    border-bottom: 1px dashed #007167;
    font-size: 15px;
    font-weight: bold;
}

.options p {
    margin: 0;
    padding: 0 13px;
    line-height: 32px;
}

.options a {
    display: flex;
    align-items: center;
    gap: 5px;
    height: 30px;
    padding: 0 13px;
    color: #0b83b7;
}

.options .off {
    color: #888;
}

.pad {
    padding: 1px;
}

/* Fault list */
.faults {
    width: calc(100% - 24px);
    margin: 20px 12px 0;
    border-collapse: collapse;
    table-layout: fixed;
    color: #000;
}

.faults th,
.faults td {
    padding: 0;
    border-bottom: 1px solid #dadada;
    text-align: center;
}

.faults th {
    height: 29px;
    font-size: 15px;
    font-weight: normal;
}

.faults td {
    height: 76px;
    font-size: 15px;
}

.faults .left {
    text-align: left;
}

.faults .del {
    padding-left: 6px;
}

.faults .fault {
    padding-right: 60px;
    font-size: 14px;
    line-height: 18px;
    color: #0b83b7;
}

.c-del {
    width: 50px;
}

.c-status {
    width: 153px;
}

.c-msg {
    width: 84px;
}

.c-parts {
    width: 57px;
}

.c-body {
    width: 108px;
}

.c-damp {
    width: 60px;
}

.c-media {
    width: 80px;
}

.c-act {
    width: 144px;
}

.icon-mail {
    width: 20px;
    height: 16px;
    margin: 0 auto;
}

.actions {
    display: flex;
    align-items: center;
}

.actions .icon-sm {
    margin-right: 26px;
}

.big {
    width: 50px;
    height: 50px;
}

.go {
    width: 34px;
    height: 50px;
    margin-left: 7px;
}

.flip {
    transform: scaleX(-1);
}

.pager {
    display: flex;
    justify-content: space-between;
    padding: 28px 18px 33px 19px;
    font-size: 26px;
    color: #0b83b7;
}

.pager a {
    display: flex;
    align-items: center;
    gap: 12px;
}

/* Bottom cards */
.bottom {
    display: grid;
    grid-template-columns: 515fr 327fr 329fr;
    column-gap: 24px;
    align-items: start;
    margin-top: 20px;
}

.left-col {
    display: flex;
    flex-direction: column;
    gap: 18px;
}

.card {
    border: 1px solid #ccc;
    border-top: none;
    border-radius: 6px;
    background: #f8f8f8;
    box-shadow: 4px 4px 3px #ccc;
}

.card h2 {
    margin: 0 -1px;
    padding: 0 13px;
    border-radius: 6px 6px 0 0;
    background: #007167;
    color: #fff;
    font-size: 17px;
    line-height: 42px;
}

.card a {
    display: flex;
    align-items: center;
    gap: 21px;
    height: 56px;
    padding-left: 12px;
    border-bottom: 1px solid #ccc;
    color: #007167;
    font-size: 16px;
    font-weight: bold;
}

.connect a {
    gap: 17px;
}

.tri {
    width: 48px;
    height: 50px;
}

.link-icon {
    width: 40px;
    height: 34px;
}

.solid {
    border: none;
    background: #007167;
    color: #fff;
}

.solid h2 {
    margin: 0;
}

.chassis {
    padding: 8px 13px 13px;
    border-top: 1px solid #65afb1;
    font-size: 16px;
    font-weight: bold;
}

.chassis label {
    display: block;
    line-height: 20px;
}

.search-row {
    display: flex;
    gap: 4px;
    margin-top: 11px;
}

.search-row input {
    width: 212px;
    height: 26px;
}

.search-row button {
    height: 26px;
    padding: 0 9px;
    border: 1px solid #767676;
    border-radius: 3px;
    background: #efefef;
    color: #000;
    font-family: Arial, "Liberation Sans", sans-serif;
    font-size: 17px;
    font-weight: normal;
    line-height: 22px;
}

/* Scrollbar */
.scrollbar {
    width: 21px;
    padding: 9px 2px 0;
    background: #f1f1f1;
}

.scrollbar svg {
    margin: 0 auto;
}

.thumb {
    height: 530px;
    margin-top: 153px;
    background: #c1c1c1;
}

/* Taskbar */
.taskbar {
    display: flex;
    height: 50px;
    background: linear-gradient(90deg, #22363f 40%, #1a2740 85%);
    color: #fff;
}

.taskbar button {
    display: flex;
    justify-content: center;
    align-items: center;
    padding: 0;
    border: none;
    background: none;
}

.taskbar .start {
    width: 60px;
}

.search {
    display: flex;
    align-items: center;
    width: 360px;
    padding: 0 4px 0 13px;
    border: 1px solid #bbb;
    background: #f2f2f2;
    color: #333;
    font-size: 18px;
}

.search span {
    flex: 1;
    margin-left: 12px;
}

.case {
    display: flex;
    justify-content: center;
    align-items: center;
    width: 90px;
    height: 40px;
    border-radius: 8px;
    background: #e3e3e3;
}

.apps {
    display: flex;
}

.taskbar .apps button {
    position: relative;
    width: 62px;
    border-bottom: 3px solid transparent;
}

.taskbar .apps .open {
    border-bottom-color: #76b9ed;
}

.taskbar .apps .lit {
    background: #50626a;
}

.taskbar .apps .dim {
    color: #0b3266;
}

.badge {
    position: absolute;
    right: 13px;
    bottom: 0;
    width: 20px;
    height: 20px;
    border-radius: 50%;
    background: #2f6b22;
    font-size: 12px;
    font-weight: bold;
    line-height: 20px;
}

.tray {
    display: flex;
    align-items: center;
    gap: 10px;
    margin-left: auto;
    padding-right: 24px;
    border-right: 1px solid #8a93a3;
    margin-right: 5px;
}

.weather {
    display: flex;
    align-items: center;
    gap: 10px;
    margin-right: 20px;
    font-size: 17px;
}

.clock {
    margin-right: 14px;
    text-align: center;
    line-height: 23px;
}

/* Update popup */
.popup {
    position: absolute;
    right: 7px;
    bottom: 57px;
    display: flex;
    gap: 13px;
    width: 381px;
    padding: 5px 8px 11px 5px;
    border: 1px solid #000;
    border-radius: 12px;
    background: #fff;
    color: #000;
}

.dell {
    width: 42px;
    height: 42px;
}

.popup-body {
    flex: 1;
    display: flex;
    flex-direction: column;
    gap: 8px;
    line-height: 22px;
    white-space: nowrap;
}

.popup strong {
    padding-top: 2px;
}

.popup-line {
    display: flex;
    justify-content: space-between;
}

.popup a {
    color: #0000ee;
}

.popup button {
    width: 145px;
    height: 29px;
    margin-top: 4px;
    padding: 0;
    border: 1px solid #707070;
    background: #ddd;
}
```
